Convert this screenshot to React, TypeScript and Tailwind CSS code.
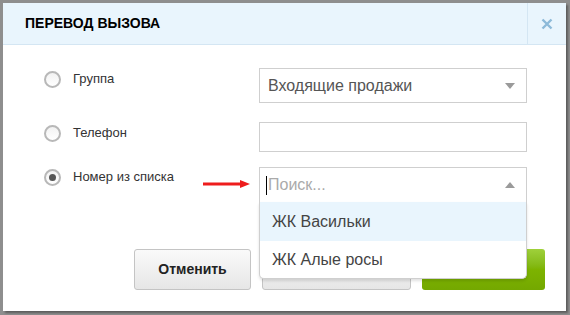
import type { ReactNode } from "react";

const font = { fontFamily: '"Liberation Sans", Arial, sans-serif' };

function Radio({ checked }: { checked?: boolean }) {
  return (
    <span className="flex h-[17px] w-[17px] shrink-0 items-center justify-center rounded-full border-2 border-[#b8b8b8] bg-gradient-to-b from-[#f2f2f2] to-white">
      {checked && <span className="h-[7px] w-[7px] rounded-full bg-[#555]" />}
    </span>
  );
}

function Row({
  label,
  checked,
  radioTop,
  children,
}: {
  label: string;
  checked?: boolean;
  radioTop: string;
  children: ReactNode;
}) {
  return (
    <div className="flex items-start">
      <div className={`flex w-[256px] items-start gap-[12px] pl-[41px] ${radioTop}`}>
        <Radio checked={checked} />
        <span className="pt-[1px] text-[13px] leading-[14px] text-[#333]">{label}</span>
      </div>
      {children}
    </div>
  );
}

function Caret({ up }: { up?: boolean }) {
  return (
    <svg width="10" height="6" viewBox="0 0 10 6" className="shrink-0">
      <path d={up ? "M0 6 L5 0 L10 6 Z" : "M0 0 L5 6 L10 0 Z"} fill="#9a9a9a" />
    </svg>
  );
}

export default function App() {
  return (
    <div className="h-[315px] w-[570px] bg-[#8e8e8e] pl-[3px] pt-[3px]" style={font}>
      <div className="relative flex h-[308px] w-[563px] flex-col bg-white shadow-[2px_2px_2px_rgba(0,0,0,0.35)]">
        {/* header */}
        <div className="flex h-[42px] shrink-0 border-b border-[#d4e6f3] bg-[#e9f5fd]">
          <div className="flex flex-1 items-center pl-[22px] text-[14px] font-bold text-black">
            ПЕРЕВОД ВЫЗОВА
          </div>
          <div className="flex w-[39px] items-center justify-center border-l border-[#d4e6f3]">
            <svg width="12" height="12" viewBox="0 0 12 12">
              <path d="M1.5 1.5 L10.5 10.5 M10.5 1.5 L1.5 10.5" stroke="#8dbad9" strokeWidth="2.4" />
            </svg>
          </div>
        </div>

        {/* body */}
        <div className="flex flex-col pt-[23px]">
          <Row label="Группа" radioTop="mt-[3px]">
            <div className="flex h-[35px] w-[268px] items-center justify-between border border-[#cfcfcf] pl-[8px] pr-[11px] text-[16px] text-[#555]">
              <span>Входящие продажи</span>
              <Caret />
            </div>
          </Row>
          <div className="h-[19px]" />
          <Row label="Телефон" radioTop="mt-[3px]">
            <div className="h-[30px] w-[268px] border border-[#cfcfcf]" />
          </Row>
          <div className="h-[15px]" />
          <Row label="Номер из списка" checked radioTop="mt-[2px]">
            <div className="relative w-[268px]">
              <svg width="48" height="8" viewBox="0 0 48 8" className="absolute left-[-56px] top-[13px]">
                <path d="M0 4 H38" stroke="#ee1c1c" strokeWidth="3" />
                <path d="M37 0 L47 4 L37 8 Z" fill="#ee1c1c" />
              </svg>
              <div className="flex h-[36px] items-center justify-between border border-[#cfcfcf] pl-[6px] pr-[11px] text-[16px]">
                <span className="flex items-center">
                  <span className="mr-[1px] h-[19px] w-px bg-black" />
                  <span className="text-[#aaa]">Поиск...</span>
                </span>
                <Caret up />
              </div>
              <div className="absolute left-0 right-0 top-[35px] z-10 rounded-b-[5px] border border-t-0 border-[#cfcfcf] bg-white text-[16px] text-[#444] shadow-[0_2px_3px_rgba(0,0,0,0.12)]">
                <div className="flex h-[39px] items-center bg-[#e9f5fd] pl-[12px]">ЖК Васильки</div>
                <div className="flex h-[37px] items-center pl-[12px]">ЖК Алые росы</div>
              </div>
            </div>
          </Row>
        </div>

        {/* footer */}
        <div className="mt-[46px] flex gap-[11px] pl-[131px]">
          <button className="h-[41px] w-[117px] rounded-[3px] border border-[#c4c4c4] bg-gradient-to-b from-[#fafafa] to-[#e6e6e6] text-[14px] font-bold text-[#222]">
            Отменить
          </button>
          <button className="h-[41px] w-[149px] rounded-[3px] border border-[#c4c4c4] bg-gradient-to-b from-[#fafafa] to-[#e6e6e6]" />
          <button className="h-[41px] w-[123px] rounded-[3px] bg-gradient-to-b from-[#9fd13a] via-[#7db300] to-[#74a800]" />
        </div>
      </div>
    </div>
  );
}
